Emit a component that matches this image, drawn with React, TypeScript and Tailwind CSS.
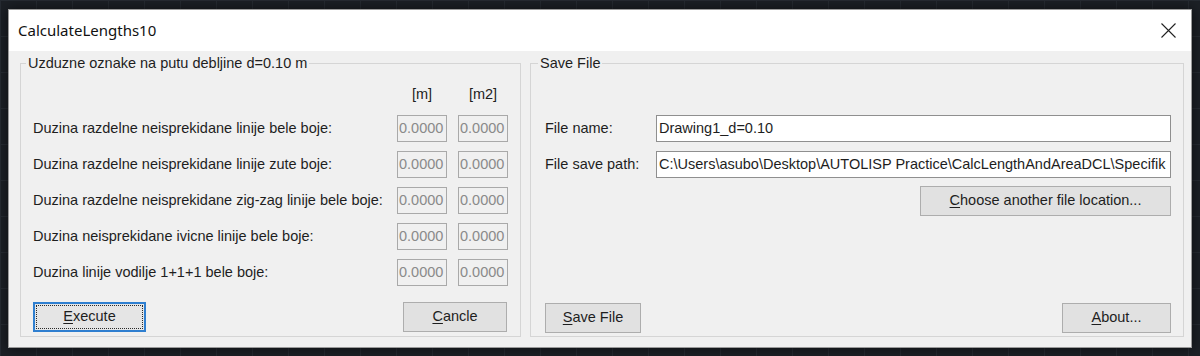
import { ReactNode } from 'react'

const rows = [
  'Duzina razdelne neisprekidane linije bele boje:',
  'Duzina razdelne neisprekidane linije zute boje:',
  'Duzina razdelne neisprekidane zig-zag linije bele boje:',
  'Duzina neisprekidane ivicne linije bele boje:',
  'Duzina linije vodilje 1+1+1 bele boje:',
]

// mnemonic letter gets underlined, like win32 dialogs
function Label({ k, rest }: { k: string; rest: string }) {
  return (
    <span>
      <span className="underline underline-offset-2">{k}</span>
      {rest}
    </span>
  )
}

function Button({ children, className = '', focused = false }: { children: ReactNode; className?: string; focused?: boolean }) {
  if (focused) {
    return (
      <button className={`flex h-[30px] items-center justify-center border-2 border-[#2f7fd0] bg-[#e5e5e5] p-[1px] ${className}`}>
        <span className="flex h-full w-full items-center justify-center border border-dotted border-[#2a2a2a]">{children}</span>
      </button>
    )
  }
  return (
    <button className={`flex h-[30px] items-center justify-center border border-[#adadad] bg-[#e1e1e1] ${className}`}>
      {children}
    </button>
  )
}

function ValueBox() {
  return (
    <div className="flex h-[27px] w-[50px] items-center border border-[#a9a9a9] bg-[#f0f0f0] pl-[1px] text-[#8a8a8a]">
      0.0000
    </div>
  )
}

export default function App() {
  return (
    <div className="h-[356px] w-[1200px] overflow-hidden bg-[#1c2026] bg-[linear-gradient(#262b32_1px,transparent_1px),linear-gradient(90deg,#262b32_1px,transparent_1px)] bg-[size:36px_36px] pl-[8px] pt-[9px] font-['Liberation_Sans',Arial,sans-serif] text-[14.5px] text-[#1e1e1e]">
      <div className="flex h-[339px] w-[1184px] flex-col border border-[#9a9a9a] bg-[#f0f0f0] shadow-[0_0_12px_rgba(0,0,0,0.6)]">
        {/* title bar */}
        <div className="flex h-[41px] shrink-0 items-center justify-between bg-white">
          <span className="pl-[9px] font-['Noto_Sans',sans-serif] text-[15px] text-[#111]">CalculateLengths10</span>
          <div className="flex h-full w-[46px] items-center justify-center">
            <svg width="15" height="15" viewBox="0 0 15 15" fill="none" stroke="#222" strokeWidth="1.1">
              <path d="M0.5 0.5 L14.5 14.5 M14.5 0.5 L0.5 14.5" />
            </svg>
          </div>
        </div>

        <div className="flex flex-1 gap-[9px] pb-[10px] pl-[11px] pr-[7px] pt-[4px]">
          {/* left group */}
          <fieldset className="w-[501px] min-w-0 shrink-0 border border-[#d5d5d5]">
            <legend className="ml-[5px] px-[2px] leading-[16px]">Uzduzne oznake na putu debljine d=0.10 m</legend>
            <div className="pl-[12px] pr-[12px]">
              <div className="mt-[14px] flex h-[20px] items-center justify-end gap-[11px]">
                <span className="w-[50px] text-center">[m]</span>
                <span className="w-[50px] text-center">[m2]</span>
              </div>
              <div className="mt-[10px] flex flex-col gap-[9px]">
                {rows.map((r) => (
                  <div key={r} className="flex h-[27px] items-center justify-between">
                    <span className="whitespace-nowrap">{r}</span>
                    <div className="flex gap-[11px]">
                      <ValueBox />
                      <ValueBox />
                    </div>
                  </div>
                ))}
              </div>
              <div className="mt-[16px] flex justify-between">
                <Button focused className="w-[113px]">
                  <Label k="E" rest="xecute" />
                </Button>
                <Button className="mr-[1px] w-[104px]">
                  <Label k="C" rest="ancle" />
                </Button>
              </div>
            </div>
          </fieldset>

          {/* right group */}
          <fieldset className="min-w-0 flex-1 border border-[#d5d5d5]">
            <legend className="ml-[7px] px-[2px] leading-[16px]">Save File</legend>
            <div className="pl-[14px] pr-[12px]">
              <div className="mt-[44px] flex flex-col gap-[9px]">
                <div className="flex h-[27px] items-center">
                  <span className="w-[111px] shrink-0">File name:</span>
                  <div className="flex h-full min-w-0 flex-1 items-center border border-[#8f8f8f] bg-white pl-[2px]">Drawing1_d=0.10</div>
                </div>
                <div className="flex h-[27px] items-center">
                  <span className="w-[111px] shrink-0">File save path:</span>
                  <div className="flex h-full min-w-0 flex-1 items-center overflow-hidden whitespace-nowrap border border-[#8f8f8f] bg-white pl-[2px]">
                    C:\Users\asubo\Desktop\AUTOLISP Practice\CalcLengthAndAreaDCL\Specifik
                  </div>
                </div>
              </div>
              <div className="mt-[8px] flex justify-end">
                <Button className="h-[28px] w-[251px]">
                  <Label k="C" rest="hoose another file location..." />
                </Button>
              </div>
              <div className="mt-[87px] flex justify-between">
                <Button className="w-[96px]">
                  <Label k="S" rest="ave File" />
                </Button>
                <Button className="w-[109px]">
                  <Label k="A" rest="bout..." />
                </Button>
              </div>
            </div>
          </fieldset>
        </div>
      </div>
    </div>
  )
}
